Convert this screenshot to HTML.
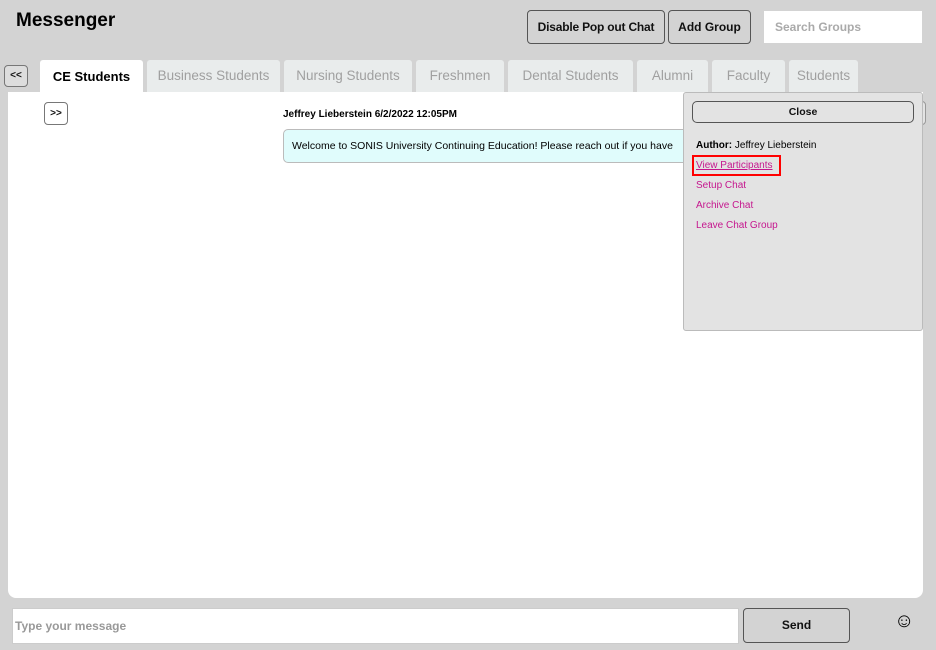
<!DOCTYPE html>
<html><head><style>
body{margin:0;width:936px;height:650px;background:#d3d3d3;font-family:"Liberation Sans",sans-serif;position:relative;overflow:hidden}
.a{position:absolute}
h1{position:absolute;left:16px;top:10px;margin:0;font-size:19px;font-weight:bold;color:#000}
.btn{position:absolute;border:1px solid #555;border-radius:4px;background:#d3d3d3;font-weight:bold;font-size:12px;text-align:center;box-sizing:border-box;color:#111}
.tab{position:absolute;top:60px;height:32px;background:#e9ecec;border-radius:3px 3px 0 0;color:#a0a0a0;font-size:13.5px;line-height:31px;text-align:center;box-sizing:border-box}
.lnk{position:absolute;left:696px;font-size:10px;color:#c5168e}
</style></head><body>
<h1>Messenger</h1>
<div class="btn" style="left:527px;top:10px;width:138px;height:34px;line-height:32px;letter-spacing:-0.2px">Disable Pop out Chat</div>
<div class="btn" style="left:668px;top:10px;width:83px;height:34px;line-height:32px">Add Group</div>
<div class="a" style="left:764px;top:11px;width:158px;height:32px;background:#fff;color:#aaa;font-size:12px;font-weight:bold;line-height:32px;padding-left:11px;box-sizing:border-box">Search Groups</div>
<div class="btn" style="left:4px;top:65px;width:24px;height:22px;line-height:20px;font-size:10px;border-color:#777;background:#ddd">&lt;&lt;</div>
<div class="tab" style="left:40px;width:103px;background:#fff;color:#000;font-weight:bold;font-size:13px;line-height:34px">CE Students</div>
<div class="tab" style="left:147px;width:133px">Business Students</div>
<div class="tab" style="left:284px;width:128px">Nursing Students</div>
<div class="tab" style="left:416px;width:88px">Freshmen</div>
<div class="tab" style="left:508px;width:125px">Dental Students</div>
<div class="tab" style="left:637px;width:71px">Alumni</div>
<div class="tab" style="left:712px;width:73px">Faculty</div>
<div class="tab" style="left:789px;width:69px">Students</div>
<div class="a" style="left:8px;top:92px;width:915px;height:506px;background:#fff;border-radius:0 0 8px 8px"></div>
<div class="btn" style="left:44px;top:102px;width:24px;height:23px;line-height:21px;font-size:10px;border-color:#777;background:#fff">&gt;&gt;</div>
<div class="a" style="left:283px;top:109px;font-size:10px;font-weight:bold">Jeffrey Lieberstein 6/2/2022 12:05PM</div>
<div class="a" style="left:283px;top:129px;width:420px;height:34px;background:#e0fcfc;border:1px solid #bbb;border-radius:5px;box-sizing:border-box;font-size:10.5px;line-height:33px;padding-left:8px;white-space:nowrap;overflow:hidden">Welcome to SONIS University Continuing Education! Please reach out if you have</div>
<div class="a" style="left:910px;top:101px;width:16px;height:24px;border:1px solid #999;border-radius:4px;background:#e3e3e3;box-sizing:border-box"></div>
<div class="a" style="left:683px;top:92px;width:240px;height:239px;background:#e3e3e3;border:1px solid #bbb;border-radius:3px;box-sizing:border-box"></div>
<div class="btn" style="left:692px;top:101px;width:222px;height:22px;line-height:20px;font-size:10.5px;background:#e3e3e3;border-radius:5px">Close</div>
<div class="a" style="left:696px;top:140px;font-size:10px"><b>Author:</b> Jeffrey Lieberstein</div>
<div class="a" style="left:692px;top:155px;width:89px;height:21px;border:2px solid #f00;box-sizing:border-box"></div>
<div class="lnk" style="top:160px;text-decoration:underline">View Participants</div>
<div class="lnk" style="top:180px">Setup Chat</div>
<div class="lnk" style="top:200px">Archive Chat</div>
<div class="lnk" style="top:220px">Leave Chat Group</div>
<div class="a" style="left:12px;top:608px;width:727px;height:36px;background:#fff;border:1px solid #ccc;box-sizing:border-box;color:#999;font-size:12px;font-weight:bold;line-height:34px;padding-left:2px">Type your message</div>
<div class="btn" style="left:743px;top:608px;width:107px;height:35px;line-height:33px;font-size:12px">Send</div>
<div class="a" style="left:894px;top:610px;font-size:20px;color:#000">☺</div>
</body></html>
